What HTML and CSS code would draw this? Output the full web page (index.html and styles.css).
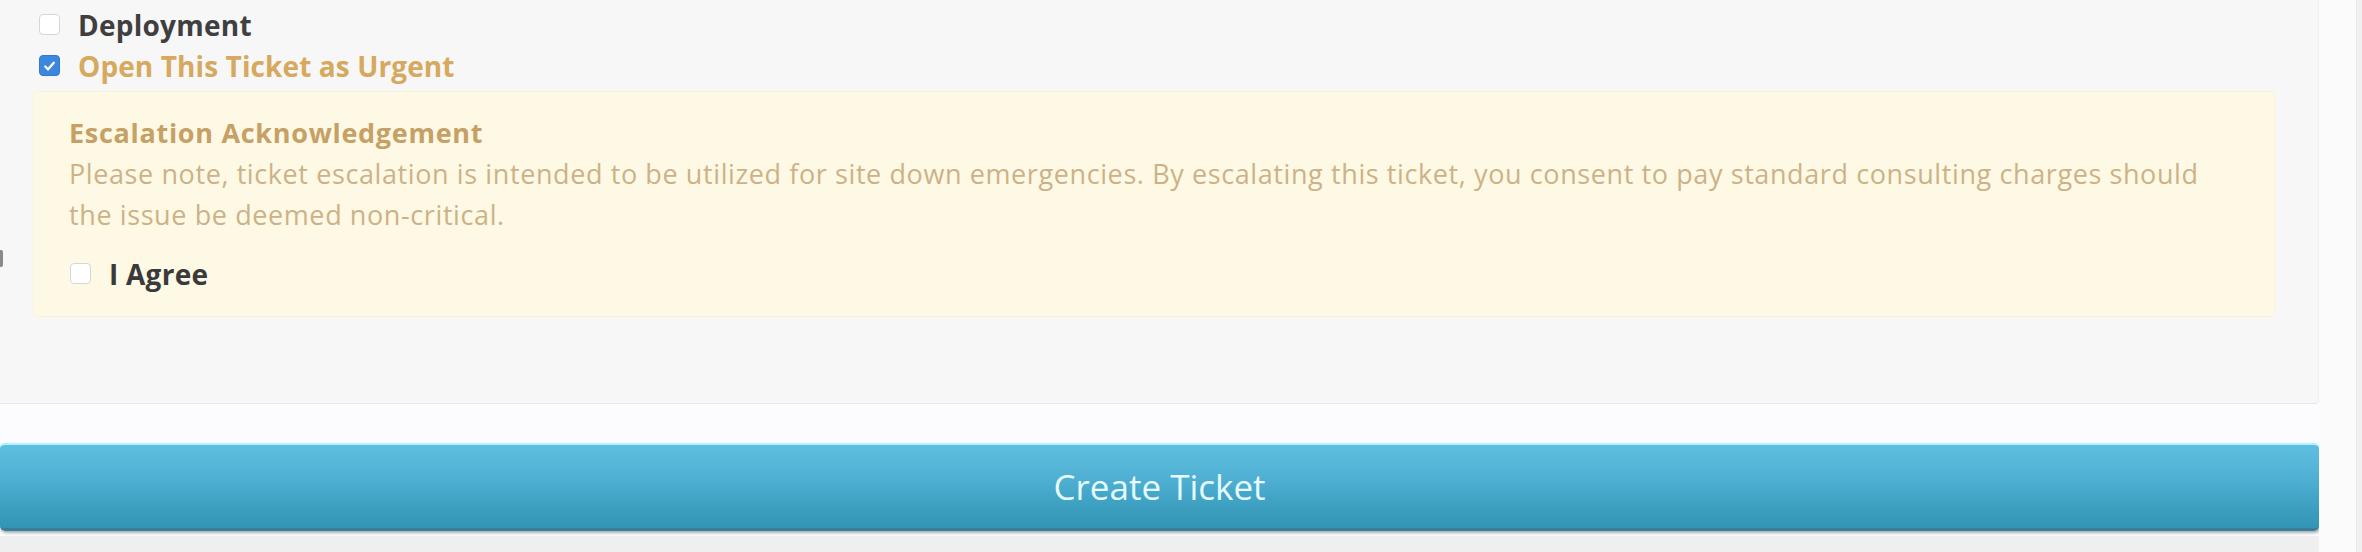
FILE: index.html
```html
<!DOCTYPE html>
<html lang="en">
<head>
<meta charset="utf-8">
<title>Create Ticket</title>
<link rel="stylesheet" href="styles.css">
</head>
<body>
<div class="page">
  <div class="main">
    <section class="panel">
      <label class="check-row">
        <span class="box"></span>
        <span class="lbl">Deployment</span>
      </label>
      <label class="check-row urgent">
        <span class="box checked">
          <svg viewBox="0 0 20 20" width="20" height="20"><path d="M5.5 10.5 L8.5 13.5 L14.5 6.5" fill="none" stroke="#fff" stroke-width="2.4" stroke-linecap="round" stroke-linejoin="round"/></svg>
        </span>
        <span class="lbl">Open This Ticket as Urgent</span>
      </label>
      <div class="alert">
        <h4 class="alert-title">Escalation Acknowledgement</h4>
        <p class="alert-text">Please note, ticket escalation is intended to be utilized for site down emergencies. By escalating this ticket, you consent to pay standard consulting charges should the issue be deemed non-critical.</p>
        <label class="check-row agree">
          <span class="box"></span>
          <span class="lbl">I Agree</span>
        </label>
      </div>
    </section>
    <div class="actions">
      <button class="btn" type="button">Create Ticket</button>
    </div>
  </div>
  <div class="side"></div>
</div>
</body>
</html>
```
FILE: styles.css
```css
* { box-sizing: border-box; }
html, body { margin: 0; padding: 0; }
body {
  width: 2362px;
  height: 552px;
  overflow: hidden;
  background: #f0f0f0;
  font-family: "Open Sans", "Liberation Sans", sans-serif;
}
.page {
  display: grid;
  grid-template-columns: 2319px 1fr;
  height: 552px;
}
.main {
  display: flex;
  flex-direction: column;
  background: linear-gradient(#fcfcfe 0, #fcfcfe 536px, #efefef 536px);
}
.panel {
  position: relative;
  height: 404px;
  background: #f7f7f7;
  border-bottom: 1px solid #e9e9e9;
  border-right: 1px solid #efefef;
  border-radius: 0 0 4px 0;
  padding: 4px 43px 0 33px;
}
.panel::before {
  content: "";
  position: absolute;
  left: 0;
  top: 250px;
  width: 3px;
  height: 17px;
  background: #8a8a8a;
  border-radius: 0 2px 2px 0;
}
.check-row {
  display: flex;
  align-items: center;
  height: 41px;
  gap: 18px;
  padding-left: 6px;
}
.box {
  width: 21px;
  height: 21px;
  flex: none;
  border: 1px solid #d6d6d6;
  border-radius: 4px;
  background: #fff;
  display: flex;
  align-items: center;
  justify-content: center;
}
.box.checked {
  background: #3d87e0;
  border-color: #3479d0;
}
.lbl {
  font-weight: 700;
  font-size: 28px;
  color: #3f3f3f;
  letter-spacing: 0.25px;
}
.urgent .lbl { color: #d6a95e; letter-spacing: 0.1px; }
.alert {
  margin-top: 5px;
  background: #fdf9e5;
  border: 1px solid #fbf2d9;
  border-radius: 4px;
  padding: 20px 70px 22px 35px;
}
.alert-title {
  margin: 0;
  font-size: 27px;
  line-height: 41px;
  font-weight: 700;
  color: #c6a064;
  letter-spacing: 0.7px;
}
.alert-text {
  margin: 0;
  font-size: 27px;
  line-height: 41px;
  color: #cdb287;
  letter-spacing: 0.6px;
}
.alert .agree {
  margin-top: 18px;
  padding-left: 1px;
}
.agree .lbl { color: #3a3a3a; }
.actions {
  padding-top: 39px;
}
.btn {
  display: block;
  width: 100%;
  height: 88px;
  border: 0;
  border-top: 2px solid #aef3ff;
  border-bottom: 3px solid #3b7f96;
  border-radius: 5px;
  background: linear-gradient(#5fbfe0, #4fb0d3 40%, #3a9dbd 80%, #3295b5);
  box-shadow: 1px 2px 3px rgba(60, 80, 90, 0.45);
  color: #e6fbff;
  font-family: "Open Sans", "Liberation Sans", sans-serif;
  font-size: 35px;
  padding: 0;
  cursor: pointer;
}
.side {
  background: #fbfbfc;
  border-right: 1px solid #eaeaea;
  margin-right: 5px;
}
```
